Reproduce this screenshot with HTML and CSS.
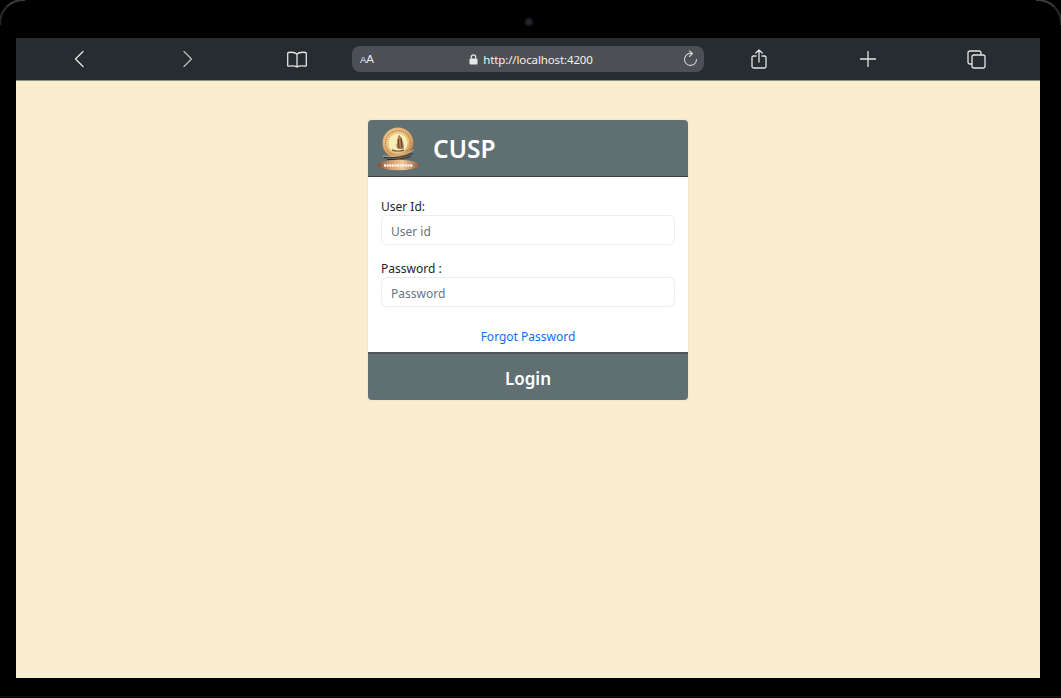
FILE: index.html
```html
<!DOCTYPE html>
<html lang="en">
<head>
<meta charset="utf-8">
<title>CUSP</title>
<link rel="stylesheet" href="styles.css">
</head>
<body>
<div class="device">
  <span class="camera"></span>
  <span class="corner corner-left"></span>
  <span class="corner corner-right"></span>
  <span class="chin"></span>
  <div class="screen">
    <nav class="toolbar">
      <span class="slot"><svg width="12" height="18" viewBox="0 0 12 18"><path d="M10 1.500 2.500 9l7.500 7.500" class="ic"/></svg></span>
      <span class="slot"><svg width="12" height="18" viewBox="0 0 12 18"><path d="M2 1.500 9.500 9 2 16.500" class="ic dim"/></svg></span>
      <span class="slot"><svg width="20" height="17" viewBox="0 0 20 17"><path d="M10 3C8.500 1.600 5 1 1.500 1.500 1 1.600.7 2 .7 2.500V14.500c0 .5.3.8.8.7C5 14.700 8.500 15 10 16c1.500-1 5-1.300 8.500-.8.500.1.800-.2.800-.7V2.500c0-.5-.3-.9-.8-1C15 1 11.500 1.600 10 3ZM10 3V16" class="ic"/></svg></span>
      <div class="url">
        <span class="aa"><small>A</small>A</span>
        <span class="address">
          <svg width="9" height="11" viewBox="0 0 9 11"><rect x=".5" y="4.500" width="8" height="6" rx="1" fill="#e6e7e8"/><path d="M2.300 4.500V3a2.200 2.200 0 0 1 4.400 0v1.500" fill="none" stroke="#e6e7e8" stroke-width="1.200"/></svg>
          http://localhost:4200
        </span>
        <svg class="reload" width="15" height="18" viewBox="0 0 15 18"><path d="M8.500 3.500A6 6 0 1 0 13.500 9.500" class="thin"/><path d="M6.500 1 9.500 3.500 6.500 6.500" class="thin"/></svg>
      </div>
      <span class="slot"><svg width="16" height="20" viewBox="0 0 16 20"><path d="M5 7H2.500C1.500 7 1 7.500 1 8.500v9c0 1 .5 1.500 1.500 1.500h11c1 0 1.500-.5 1.500-1.500v-9c0-1-.5-1.500-1.500-1.500H11M8 13V1.200M4.800 4 8 1l3.200 3" class="ic"/></svg></span>
      <span class="slot"><svg width="16" height="16" viewBox="0 0 16 16"><path d="M8 .5v15M.5 8h15" class="ic"/></svg></span>
      <span class="slot"><svg width="19" height="19" viewBox="0 0 19 19"><path d="M4.500 14H3c-1.300 0-2-.7-2-2V3c0-1.300.7-2 2-2h9c1.300 0 2 .7 2 2v1.500" class="ic"/><rect x="5" y="5" width="13" height="13" rx="2" class="ic"/></svg></span>
    </nav>
    <main class="page">
      <form class="card">
        <header class="card-head">
          <svg class="logo" width="46" height="46" viewBox="0 0 46 46">
            <defs>
              <radialGradient id="gold" cx=".45" cy=".42" r=".58"><stop offset=".6" stop-color="#eec488"/><stop offset=".85" stop-color="#dba25e"/><stop offset="1" stop-color="#a9703c"/></radialGradient>
              <linearGradient id="base" x1="0" x2="1" y1="0" y2="0"><stop offset="0" stop-color="#7a4f36"/><stop offset=".3" stop-color="#d59a68"/><stop offset=".6" stop-color="#f3c9a0"/><stop offset="1" stop-color="#8a5a3b"/></linearGradient>
            </defs>
            <circle cx="22" cy="17" r="15.500" fill="url(#gold)"/>
            <circle cx="22" cy="17" r="12.500" fill="none" stroke="#a97f4a" stroke-width="1.400" stroke-dasharray="1 1"/>
            <circle cx="22" cy="17" r="9.500" fill="#f5eeb6"/>
            <path d="M23 9c2 1 4 5 5 12l-1 2h-5c-2-2-2-4-1-6 1-3 0-6 2-8Z" fill="#b08058"/>
            <path d="M22 13l1 9M25 12l1 10" stroke="#5b3b2c" stroke-width="1"/>
            <path d="M16 24c4 1.500 8 1.500 12 0" stroke="#7d6a4a" stroke-width="1.400" fill="none"/>
            <path d="M7 30c9 1 20-.5 31-6" stroke="#c9cfc4" stroke-width=".7" fill="none"/>
            <path d="M8 31.500c9 1 19-.5 29-4M11 33.500c8 .5 17-1 24-3" stroke="#2f2d27" stroke-width="1" fill="none"/>
            <ellipse cx="22.500" cy="39" rx="21" ry="5.200" fill="url(#base)"/>
            <path d="M8 39.500h29" stroke="#fbf3e6" stroke-width="2.400" stroke-dasharray="2 .6"/>
          </svg>
          <h1 class="brand">CUSP</h1>
        </header>
        <div class="card-body">
          <label class="field">
            <span class="field-label">User Id:</span>
            <input class="input" type="text" placeholder="User id">
          </label>
          <label class="field">
            <span class="field-label">Password :</span>
            <input class="input" type="password" placeholder="Password">
          </label>
          <a class="forgot" href="#">Forgot Password</a>
        </div>
        <button class="login" type="button">Login</button>
      </form>
    </main>
  </div>
</div>
</body>
</html>
```
FILE: styles.css
```css
* { box-sizing: border-box; }
html, body { margin: 0; height: 100%; background: #000; }
body { overflow: hidden; font-family: "Noto Sans", "Open Sans", sans-serif; }
.device { position: relative; width: 1061px; height: 698px; padding: 38px 21px 20px 16px; background: #000; }
.camera { position: absolute; left: 524px; top: 17px; width: 10px; height: 10px; border-radius: 50%; background: radial-gradient(circle, #25282c 0 25%, #14161a 45%, #060607 75%, #000 100%); }
.corner { position: absolute; top: -1px; width: 26px; height: 26px; border-top: 2px solid #3a3a3a; pointer-events: none; }
.corner-left { left: -1px; border-left: 2px solid #2a2a2a; border-top-left-radius: 24px; }
.corner-right { right: -1px; border-right: 2px solid #2a2a2a; border-top-right-radius: 24px; }
.chin { position: absolute; left: 0; right: 0; bottom: 1px; height: 1px; background: #141414; }
.screen { display: flex; flex-direction: column; height: 640px; }
.toolbar { display: flex; align-items: center; flex: 0 0 43px; padding: 0 9px 0 8px; background: #272c30; border-bottom: 1px solid #8d8d88; }
.slot { display: flex; justify-content: center; align-items: center; flex: 0 0 109px; }
.ic { fill: none; stroke: #e4e5e6; stroke-width: 1.300; stroke-linecap: round; stroke-linejoin: round; }
.dim { stroke: #b9bbbd; }
.thin { fill: none; stroke: #d3d4d6; stroke-width: 1.100; stroke-linecap: round; stroke-linejoin: round; }
.url { display: flex; align-items: center; flex: 0 0 352px; height: 26px; margin-left: 1px; padding: 0 6px 0 8px; border-radius: 8px; background: #4c4f53; color: #f1f1f2; }
.aa { width: 16px; font: 11.500px "Liberation Sans", sans-serif; color: #e8ecf2; }
.aa small { font-size: 9.500px; }
.address { display: flex; align-items: center; justify-content: center; gap: 5px; flex: 1; padding-left: 3px; font-size: 11.500px; letter-spacing: -.12px; white-space: nowrap; }
.reload { flex: none; }
.page { flex: 1; display: flex; justify-content: center; align-items: flex-start; padding-top: 39px; background: #f9edcf; }
.card { width: 320px; overflow: hidden; border-radius: 4px; background: #fff; box-shadow: 0 0 1px rgba(0,0,0,.25); }
.card-head { display: flex; align-items: center; height: 57px; padding: 0 8px; background: #607072; border-bottom: 1.500px solid #394244; }
.logo { flex: none; margin-top: 1px; }
.brand { margin: 2px 0 0 11px; color: #fff; font-size: 24.500px; line-height: 1; font-weight: 600; }
.card-body { display: flex; flex-direction: column; padding: 21px 13px 0; height: 175px; }
.field { display: block; margin-bottom: 15px; }
.field-label { display: block; height: 17px; font-size: 12px; line-height: 17px; color: #212529; }
.input { display: block; width: 100%; height: 30px; padding: 2px 9px 0; border: 1px solid #e9ecef; border-radius: 6px; outline: 0; background: #fff; font: 12px "Noto Sans", sans-serif; color: #495057; }
.input::placeholder { color: #6c757d; opacity: 1; }
.forgot { align-self: center; margin-top: 6px; font-size: 12px; line-height: 18px; color: #0d6efd; text-decoration: none; }
.login { display: block; width: 100%; height: 48px; padding: 3px 0 0; border: 0; border-top: 2px solid #4e5759; background: #607072; color: #fff; font: 600 17px "Noto Sans", sans-serif; }
```
